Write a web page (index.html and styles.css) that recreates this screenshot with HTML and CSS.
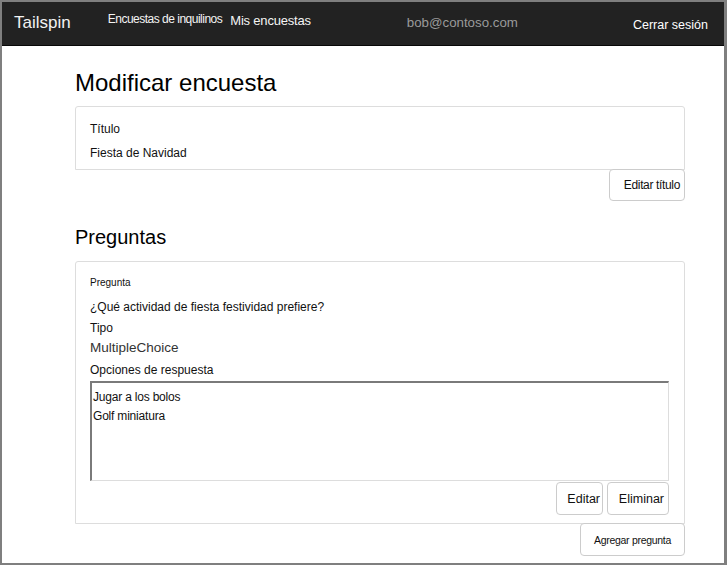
FILE: index.html
```html
<!DOCTYPE html>
<html lang="es">
<head>
<meta charset="utf-8">
<title>Modificar encuesta</title>
<link rel="stylesheet" href="styles.css">
</head>
<body>
<div class="frame">
  <header class="navbar">
    <span class="brand">Tailspin</span>
    <nav class="nav">
      <a class="nav-a">Encuestas de inquilinos</a>
      <a class="nav-b">Mis encuestas</a>
    </nav>
    <span class="user">bob@contoso.com</span>
    <a class="logout">Cerrar sesión</a>
  </header>
  <main class="container">
    <h1 class="h1">Modificar encuesta</h1>
    <section class="panel panel-title">
      <div class="label">Título</div>
      <div class="value">Fiesta de Navidad</div>
    </section>
    <div class="actions">
      <button class="btn btn-title">Editar título</button>
    </div>
    <h2 class="h2">Preguntas</h2>
    <section class="panel panel-q">
      <div class="small">Pregunta</div>
      <div class="value q">¿Qué actividad de fiesta festividad prefiere?</div>
      <div class="value tipo">Tipo</div>
      <div class="type">MultipleChoice</div>
      <div class="value opts">Opciones de respuesta</div>
      <div class="textarea">
        <div>Jugar a los bolos</div>
        <div>Golf miniatura</div>
      </div>
      <div class="row-btns">
        <button class="btn btn-edit">Editar</button>
        <button class="btn btn-del">Eliminar</button>
      </div>
    </section>
    <div class="actions">
      <button class="btn btn-add">Agregar pregunta</button>
    </div>
  </main>
</div>
</body>
</html>
```
FILE: styles.css
```css
* { box-sizing: border-box; }
html, body { margin: 0; padding: 0; }
body {
  font-family: "Liberation Sans", Arial, sans-serif;
  color: #111;
  background: #fff;
}
.frame {
  width: 727px;
  height: 565px;
  border-style: solid;
  border-color: #7f7f7f;
  border-width: 2px 2px 2px 2px;
  border-right-width: 3px;
  overflow: hidden;
  background: #fff;
}
.navbar {
  height: 44px;
  background: #222;
  border-bottom: 1px solid #080808;
  display: flex;
  align-items: center;
  color: #fff;
}
.brand {
  font-size: 17px;
  color: #f2f2f2;
  margin-left: 12px;
  margin-top: -1px;
}
.nav {
  display: flex;
  margin-left: 37px;
  align-items: center;
}
.nav-a {
  font-size: 12px;
  letter-spacing: -0.5px;
  color: #f4f4f4;
  margin-top: -9px;
}
.nav-b {
  font-size: 13px;
  letter-spacing: -0.2px;
  color: #f4f4f4;
  margin-left: 8px;
  margin-top: -6px;
}
.user {
  font-size: 13.3px;
  color: #9a9a9a;
  margin-left: 96px;
  margin-top: -3px;
}
.logout {
  font-size: 12.5px;
  color: #fff;
  margin-left: auto;
  margin-right: 16px;
  margin-top: 2px;
}
.container {
  width: 610px;
  margin-left: 73px;
}
.h1 {
  font-size: 24px;
  font-weight: normal;
  margin: 24px 0 0;
  line-height: 26px;
  color: #000;
}
.panel {
  border: 1px solid #ddd;
  border-radius: 3px 3px 0 0;
  padding: 0 15px 0 14px;
}
.panel-title {
  margin-top: 10px;
  height: 64px;
  padding-top: 15px;
}
.label, .value {
  font-size: 12px;
  line-height: 14px;
  color: #111;
}
.panel-title .value { margin-top: 10px; }
.actions {
  display: flex;
  justify-content: flex-end;
}
.btn {
  font-family: "Liberation Sans", Arial, sans-serif;
  background: #fff;
  border: 1px solid #ccc;
  border-radius: 4px;
  height: 32px;
  color: #111;
  padding: 0;
  text-align: right;
}
.btn-title {
  width: 76px;
  font-size: 12px;
  letter-spacing: -0.35px;
  margin-top: -1px;
  padding-right: 4px;
}
.h2 {
  font-size: 20px;
  font-weight: normal;
  margin: 24px 0 0;
  line-height: 24px;
  color: #000;
}
.panel-q {
  margin-top: 12px;
  height: 263px;
  padding-top: 15px;
}
.small {
  font-size: 10px;
  line-height: 12px;
  color: #111;
}
.q { margin-top: 11px; }
.tipo { margin-top: 7px; }
.type {
  font-size: 13.5px;
  color: #333;
  margin-top: 5px;
  line-height: 16px;
}
.opts { margin-top: 7px; }
.textarea {
  margin-top: 4px;
  height: 100px;
  border-style: solid;
  border-width: 2px 1px 1px 2px;
  border-color: #7a7a7a #ddd #ddd #7a7a7a;
  padding: 5px 1px;
  font-size: 12px;
  line-height: 19px;
  letter-spacing: -0.2px;
}
.row-btns {
  display: flex;
  justify-content: flex-end;
  gap: 4px;
  margin-top: 1px;
}
.btn-edit { width: 47px; height: 33px; font-size: 12.5px; padding-right: 2px; }
.btn-del { width: 62px; height: 33px; font-size: 12.5px; padding-right: 4px; }
.btn-add {
  width: 105px;
  height: 33px;
  font-size: 10.5px;
  letter-spacing: -0.3px;
  text-align: center;
  margin-top: -1px;
}
```
